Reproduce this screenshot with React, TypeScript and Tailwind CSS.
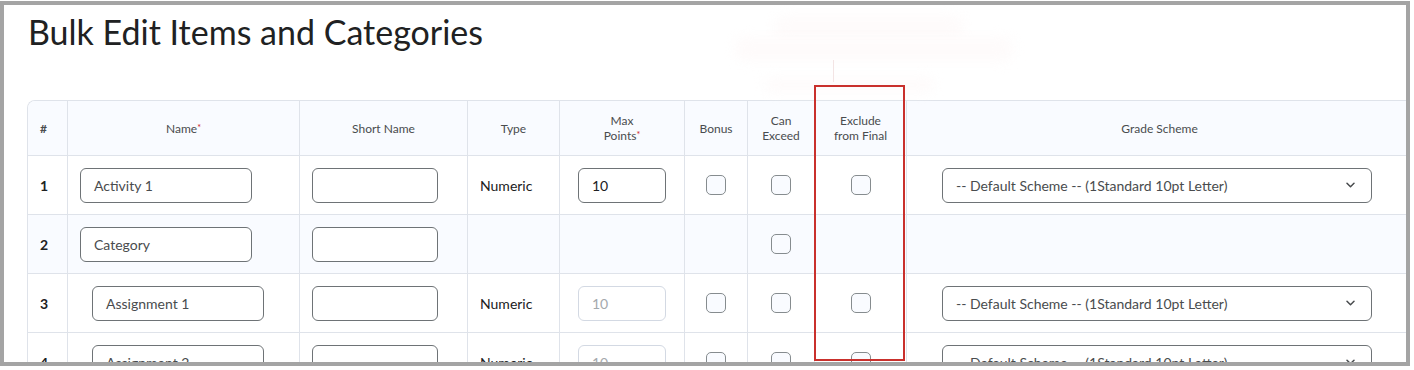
import React from "react";

const COLS = "grid-cols-[40px_232px_168px_92px_125px_63px_67px_92px_506px]";

type Row = {
  n: number;
  name: string;
  indent?: boolean;
  category?: boolean;
};

const rows: Row[] = [
  { n: 1, name: "Activity 1" },
  { n: 2, name: "Category", category: true },
  { n: 3, name: "Assignment 1", indent: true },
  { n: 4, name: "Assignment 2", indent: true },
];

const Star = () => <span className="text-[#cd2026] text-[9px] align-top relative -top-[1px]">*</span>;

const Checkbox = () => (
  <div className="w-5 h-5 rounded-[5px] border border-[#868c8f] bg-[#f9fbff]" />
);

const TextBox = ({ value, className = "" }: { value?: string; className?: string }) => (
  <div
    className={`h-[35px] rounded-[6px] border border-[#6e7376] bg-white flex items-center px-[13px] text-[14px] text-[#494c4e] ${className}`}
  >
    {value}
  </div>
);

const SchemeSelect = () => (
  <div className="ml-[35px] w-[430px] h-[35px] rounded-[6px] border border-[#6e7376] bg-white flex items-center justify-between pl-[13px] pr-[16px] text-[14px] text-[#494c4e]">
    <span>-- Default Scheme -- (1Standard 10pt Letter)</span>
    <svg width="9" height="6" viewBox="0 0 9 6" fill="none">
      <path d="M1 1.2l3.5 3.5L8 1.2" stroke="#494c4e" strokeWidth="1.5" strokeLinecap="round" strokeLinejoin="round" />
    </svg>
  </div>
);

const HeaderCell = ({ children, left }: { children: React.ReactNode; left?: boolean }) => (
  <div
    className={`h-[55px] border-r border-b border-[#dfe3ea] flex items-center text-[12px] leading-[15px] text-[#494c4e] ${
      left ? "pl-3 font-bold" : "justify-center text-center"
    }`}
  >
    {children}
  </div>
);

const Cell = ({ children, center, className = "" }: { children?: React.ReactNode; center?: boolean; className?: string }) => (
  <div
    className={`h-[59px] border-r border-b border-[#dfe3ea] flex items-center ${center ? "justify-center" : ""} ${className}`}
  >
    {children}
  </div>
);

export default function App() {
  return (
    <div className="w-[1414px] h-[370px] bg-white pt-px font-['Lato',sans-serif]">
      <div className="relative w-[1410px] h-[365px] border-4 border-[#a4a4a4] overflow-hidden bg-white">
        {/* blurred tooltip remnants */}
        <div className="absolute left-[770px] top-[10px] w-[190px] h-[26px] rounded-full bg-[#fefbfb] blur-[6px]" />
        <div className="absolute left-[730px] top-[32px] w-[280px] h-[24px] rounded-full bg-[#fefbfb] blur-[6px]" />
        <div className="absolute left-[760px] top-[72px] w-[170px] h-[16px] rounded-full bg-[#fefbfb] blur-[6px]" />
        <div className="absolute left-[829px] top-[55px] w-px h-[22px] bg-[#f3e4e4]" />

        <h1 className="ml-6 mt-[7px] text-[34px] leading-[40px] text-[#202122] font-normal">
          Bulk Edit Items and Categories
        </h1>

        <div className={`mt-[48px] ml-[23px] w-[1386px] grid ${COLS} border-l border-t border-[#dfe3ea] rounded-tl-[8px] overflow-hidden`}>
          <div className="contents [&>div]:bg-[#f9fbff]">
            <HeaderCell left>#</HeaderCell>
            <HeaderCell>
              <span>
                Name
                <Star />
              </span>
            </HeaderCell>
            <HeaderCell>Short Name</HeaderCell>
            <HeaderCell>Type</HeaderCell>
            <HeaderCell>
              <span>
                Max
                <br />
                Points
                <Star />
              </span>
            </HeaderCell>
            <HeaderCell>Bonus</HeaderCell>
            <HeaderCell>
              Can
              <br />
              Exceed
            </HeaderCell>
            <HeaderCell>
              Exclude
              <br />
              from Final
            </HeaderCell>
            <HeaderCell>Grade Scheme</HeaderCell>
          </div>

          {rows.map((r) => (
            <div key={r.n} className={`contents ${r.category ? "[&>div]:bg-[#f9fbff]" : "[&>div]:bg-white"}`}>
              <Cell className="pl-3 text-[14px] font-bold text-[#202122]">{r.n}</Cell>
              <Cell className={r.indent ? "pl-[24px]" : "pl-3"}>
                <TextBox value={r.name} className="w-[172px]" />
              </Cell>
              <Cell className="pl-3">
                <TextBox className="w-[126px]" />
              </Cell>
              <Cell className="pl-3 text-[14px] text-[#202122]">{r.category ? null : "Numeric"}</Cell>
              <Cell center>
                {r.category ? null : r.n === 1 ? (
                  <TextBox value="10" className="w-[88px] text-[#202122]" />
                ) : (
                  <div className="w-[88px] h-[35px] rounded-[6px] border border-[#d3d9e3] bg-white flex items-center px-[13px] text-[14px] text-[#a4a9ad]">
                    10
                  </div>
                )}
              </Cell>
              <Cell center>{r.category ? null : <Checkbox />}</Cell>
              <Cell center>
                <Checkbox />
              </Cell>
              <Cell center>{r.category ? null : <Checkbox />}</Cell>
              <Cell>{r.category ? null : <SchemeSelect />}</Cell>
            </div>
          ))}
        </div>

        {/* highlight box */}
        <div className="absolute left-[810px] top-[80px] w-[91px] h-[276px] border-2 border-[#c9302c]" />
      </div>
    </div>
  );
}
